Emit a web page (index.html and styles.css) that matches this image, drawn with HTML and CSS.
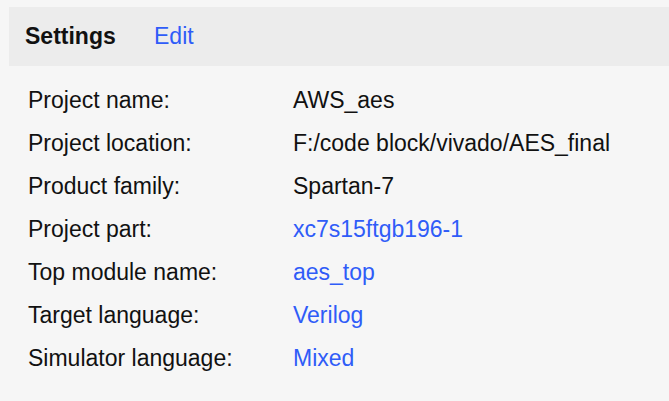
FILE: index.html
```html
<!DOCTYPE html>
<html>
<head>
<meta charset="utf-8">
<link rel="stylesheet" href="styles.css">
</head>
<body>
<div class="header">
  <span class="title">Settings</span>
  <span class="link edit">Edit</span>
</div>
<div class="props">
  <div class="label">Project name:</div><div class="value">AWS_aes</div>
  <div class="label">Project location:</div><div class="value">F:/code block/vivado/AES_final</div>
  <div class="label">Product family:</div><div class="value">Spartan-7</div>
  <div class="label">Project part:</div><div class="value link">xc7s15ftgb196-1</div>
  <div class="label">Top module name:</div><div class="value link">aes_top</div>
  <div class="label">Target language:</div><div class="value link">Verilog</div>
  <div class="label">Simulator language:</div><div class="value link">Mixed</div>
</div>
</body>
</html>
```
FILE: styles.css
```css
html, body {
  margin: 0;
  padding: 0;
  background: #f6f6f6;
  font-family: "Liberation Sans", Arial, sans-serif;
  font-size: 23px;
  color: #111;
}
.header {
  margin: 7px 0 0 9px;
  height: 59px;
  background: #ececec;
  display: flex;
  align-items: center;
  padding-left: 16px;
}
.title {
  font-weight: bold;
  width: 129px;
}
.link {
  color: #2f5cf8;
}
.props {
  display: grid;
  grid-template-columns: 265px auto;
  grid-auto-rows: 43px;
  align-items: center;
  padding: 13px 0 0 28px;
}
```
